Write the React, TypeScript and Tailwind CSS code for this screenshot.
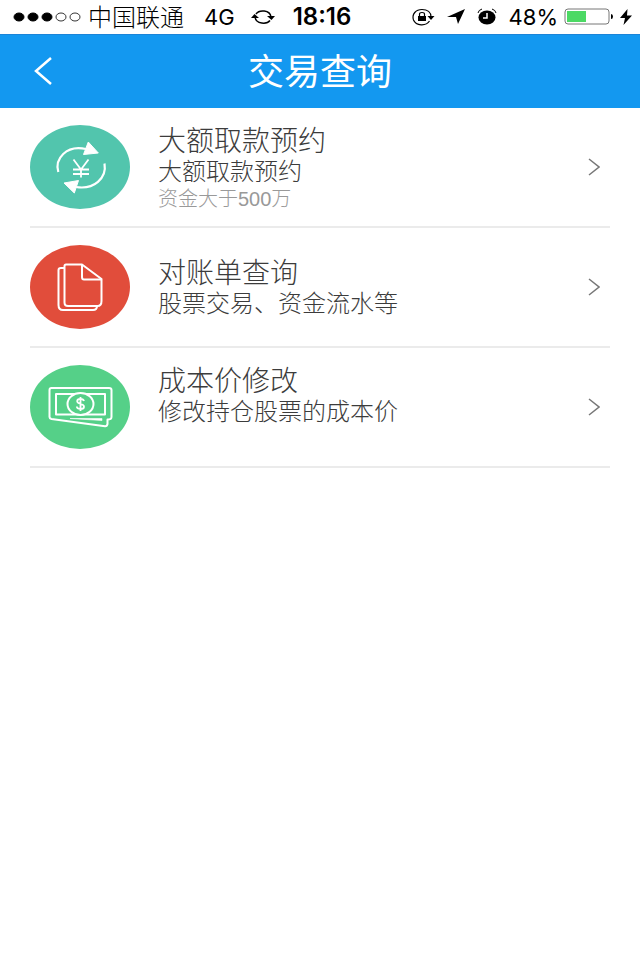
import type { ReactNode } from "react";

type MenuItem = {
  title: string;
  desc: string;
  // null keeps the line free, undefined drops it
  note?: string | null;
  color: string;
  icon: ReactNode;
};

function ExchangeIcon() {
  return (
    <svg viewBox="0 0 100 84" className="h-full w-full" fill="none" stroke="#fff" strokeWidth="2.200">
      <path d="M28.300 47C24.500 34 36 19.500 56 24" />
      <path d="M74.500 38.500C77 53 64 65 46 62" />
      <path d="M58.300 17 68.300 28 53.500 29.500Z" fill="#fff" strokeWidth="1" />
      <path d="M34 58 48.500 55.500 44.300 68Z" fill="#fff" strokeWidth="1" />
      <path d="M43.500 34.500 51 44.500 58.500 34.500M51 44.500V52.500M43 44.500H59M43 49H59" strokeWidth="1.800" />
    </svg>
  );
}

function FilesIcon() {
  return (
    <svg viewBox="0 0 100 84" className="h-full w-full" fill="none" stroke="#fff" strokeWidth="2" strokeLinejoin="round">
      <path d="M36 19.500H52L71.500 34V56Q71.500 61 67.500 61H38Q34.500 61 34.500 57.500V21Q34.500 19.500 36 19.500Z" />
      <path d="M52 19.500V32Q52 34.500 54 34.500H71.500" />
      <path d="M34.500 23H31Q28.500 23 28.500 25V60Q28.500 65 33 65H63Q67 65 67 61" />
    </svg>
  );
}

function CashIcon() {
  return (
    <svg viewBox="0 0 100 84" className="h-full w-full" fill="none" stroke="#fff" strokeWidth="2" strokeLinejoin="round">
      <path d="M21.500 23H79Q81.500 23 81.500 25V52Q81.500 54.500 77.500 54.500V59Q77 61.500 75 61.200L21.500 54Q19.500 53.500 19.500 52V25Q19.500 23 21.500 23Z" />
      <rect x="26" y="29" width="49" height="20.500" />
      <ellipse cx="50.500" cy="39" rx="13" ry="11" fill="#55d088" />
      <path d="M40 53.500H72V55.500Z" fill="#fff" strokeWidth=".6" />
      <path d="M54 36Q53.500 33.800 50.500 33.800 47.200 33.800 47.200 36.200C47.200 39.500 54 38 54 41.700Q54 44 50.500 44 47 44 46.800 41.500M50.500 32V46" strokeWidth="1.800" />
    </svg>
  );
}

const items: MenuItem[] = [
  { title: "大额取款预约", desc: "大额取款预约", note: "资金大于500万", color: "bg-[#52c5ad]", icon: <ExchangeIcon /> },
  { title: "对账单查询", desc: "股票交易、资金流水等", color: "bg-[#e14d3b]", icon: <FilesIcon /> },
  { title: "成本价修改", desc: "修改持仓股票的成本价", note: null, color: "bg-[#55d088]", icon: <CashIcon /> },
];

function StatusBar() {
  return (
    <div className="grid h-[34px] grid-cols-[1fr_auto_1fr] items-center pr-2 pl-3 text-[22px] leading-6 text-black">
      <div className="flex items-center">
        <svg viewBox="0 0 70 12" className="h-3 w-[70px]" stroke="#000">
          <ellipse cx="7" cy="6" rx="5" ry="4" />
          <ellipse cx="21" cy="6" rx="5" ry="4" />
          <ellipse cx="35" cy="6" rx="5" ry="4" />
          <ellipse cx="49" cy="6" rx="5" ry="4" fill="none" strokeWidth=".8" />
          <ellipse cx="63" cy="6" rx="5" ry="4" fill="none" strokeWidth=".8" />
        </svg>
        <span className="ml-1.5 pt-0.5 text-2xl leading-6 font-light">中国联通</span>
        <span className="ml-5">4G</span>
        <svg viewBox="0 0 24 16" className="ml-4 h-4 w-6" fill="none" stroke="#000" strokeWidth="1.500">
          <path d="M5 5C8 .5 19 .5 20 8M19 11.500C16 15.500 5 15.500 4 8" />
          <path d="M16 7H24L20.500 11ZM0 9H8L3.500 5Z" fill="#000" stroke="none" />
        </svg>
      </div>
      <span className="text-2xl leading-6 font-semibold">18:16</span>
      <div className="flex items-center justify-end">
        <svg viewBox="0 0 24 18" className="h-[18px] w-6" fill="none" stroke="#000">
          <path d="M18.500 13C15 18.500 5 18 2.500 12 .5 6 5 1.500 11 1.500 16.500 1.500 20 4.500 20 9" strokeWidth="1.200" />
          <path d="M16.500 8H23.500L20 12Z" fill="#000" stroke="none" />
          <path d="M7 8H15V13H7Z" fill="#000" stroke="none" />
          <path d="M8.500 8V6Q8.500 4.500 11 4.500T13.500 6V8" strokeWidth="1.200" />
        </svg>
        <svg viewBox="0 0 18 16" className="ml-3 h-4 w-[18px]">
          <path d="M0 8 18 0 11 15 9 8Z" />
        </svg>
        <svg viewBox="0 0 20 18" className="ml-3 h-[18px] w-5">
          <ellipse cx="10" cy="9.500" rx="8.500" ry="7" />
          <path d="M1 5Q1.500 2 5 1M19 5Q18.500 2 15 1" fill="none" stroke="#000" />
          <path d="M10 5V10H6" fill="none" stroke="#fff" strokeWidth="1.500" />
        </svg>
        <span className="ml-3">48%</span>
        <svg viewBox="0 0 50 18" className="ml-1.5 h-[18px] w-[50px]">
          <rect x="1" y="1" width="44" height="15" rx="3" fill="none" stroke="#777" />
          <rect x="3" y="3" width="19" height="11" fill="#4cd964" />
          <path d="M47 6Q49 6 49 8.500T47 11Z" />
        </svg>
        <svg viewBox="0 0 12 16" className="ml-1.5 h-4 w-3">
          <path d="M7.500 0 0 9H5L3.500 16 12 6.500H7Z" />
        </svg>
      </div>
    </div>
  );
}

function MenuRow({ item }: { item: MenuItem }) {
  return (
    <li className="border-b-2 border-[#ebebeb]">
      <a href="#" className="flex h-[118px] items-center">
        <span className={`h-[84px] w-[100px] shrink-0 rounded-[50%] ${item.color}`}>{item.icon}</span>
        <span className="ml-7 flex flex-1 flex-col pt-1 font-light">
          <span className="text-[28px] leading-[30px] text-[#3c3c3c]">{item.title}</span>
          <span className="text-2xl leading-[30px] text-[#3c3c3c]">{item.desc}</span>
          {item.note !== undefined && <span className="h-6 text-xl leading-6 text-[#999]">{item.note}</span>}
        </span>
        <svg viewBox="0 0 12 18" className="mr-2.5 h-[18px] w-3" fill="none" stroke="#777" strokeWidth="1.500">
          <path d="M1 1 11 9 1 17" />
        </svg>
      </a>
    </li>
  );
}

export default function App() {
  return (
    <div className="min-h-screen bg-white font-['Inter','Noto_Sans_CJK_SC',sans-serif]">
      <StatusBar />
      <header className="grid h-[74px] grid-cols-[80px_1fr_80px] items-center border-t border-[#1b84d8] bg-[#1398f0] text-white">
        <button type="button" aria-label="返回" className="ml-8 h-8 w-6">
          <svg viewBox="0 0 24 32" className="h-full w-full" fill="none" stroke="#fff" strokeWidth="2.500">
            <path d="M19 2 4 15 19 28" />
          </svg>
        </button>
        <h1 className="text-center text-4xl">交易查询</h1>
      </header>
      <ul className="px-[30px] font-['Liberation_Sans','Noto_Sans_CJK_SC',sans-serif]">
        {items.map((item) => (
          <MenuRow key={item.title} item={item} />
        ))}
      </ul>
    </div>
  );
}
